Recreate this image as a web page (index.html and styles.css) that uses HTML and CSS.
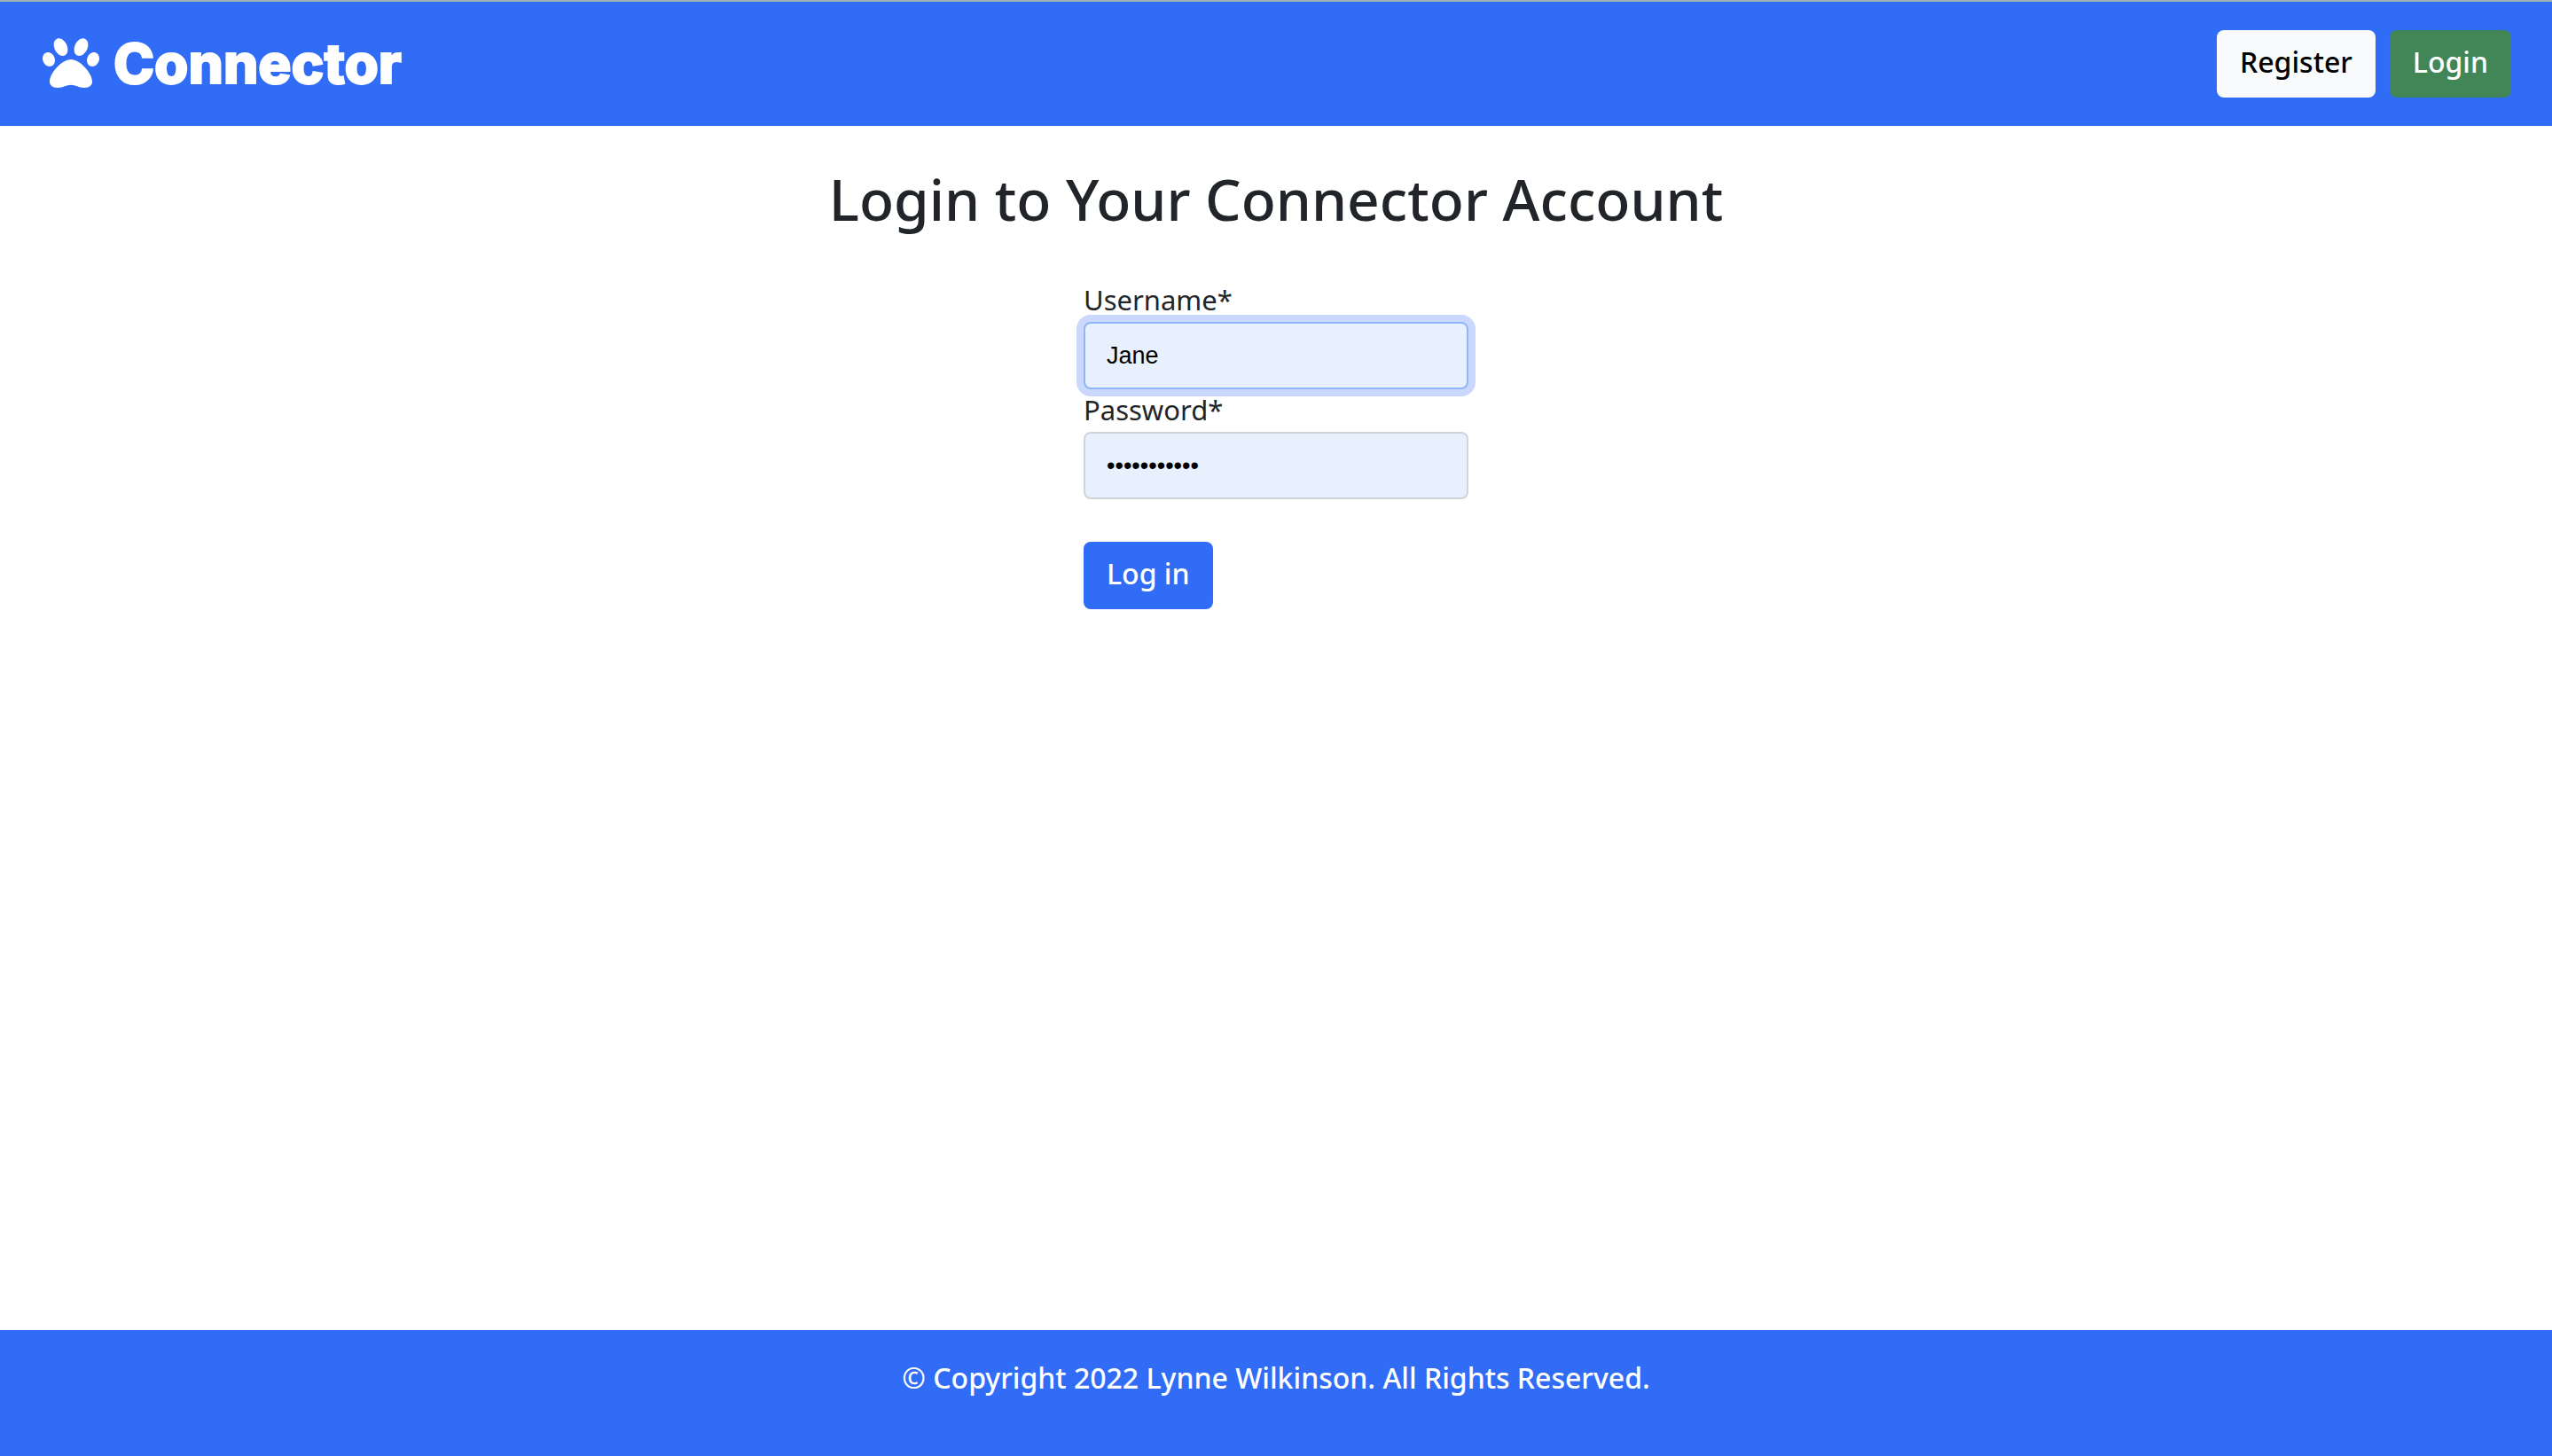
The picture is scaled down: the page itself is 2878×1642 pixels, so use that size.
FILE: index.html
```html
<!DOCTYPE html>
<html lang="en">
<head>
  <meta charset="utf-8">
  <meta name="viewport" content="width=device-width, initial-scale=1">
  <title>Connector</title>
  <link rel="stylesheet" href="styles.css">
</head>
<body>
  <header class="site-header">
    <a class="brand" href="#">
      <svg class="brand-icon" viewBox="0 0 512 512" aria-hidden="true"><path fill="currentColor" d="M256 224c-79.41 0-192 122.76-192 200.25 0 34.9 26.81 55.75 71.74 55.75 48.84 0 81.09-25.08 120.26-25.08 39.51 0 71.85 25.08 120.26 25.08 44.93 0 71.74-20.85 71.74-55.75C448 346.76 335.41 224 256 224zm-147.28-12.61c-10.4-34.65-42.44-57.09-71.56-50.13-29.12 6.96-44.29 40.69-33.89 75.34 10.4 34.65 42.44 57.09 71.56 50.13 29.12-6.96 44.29-40.69 33.89-75.34zm84.72-20.78c30.94-8.14 42.94-49.34 26.81-92.01s-54.29-70.66-85.22-62.52-42.94 49.34-26.81 92.01c16.14 42.67 54.29 70.66 85.22 62.52zm281.4-29.34c-29.12-6.96-61.15 15.48-71.56 50.13-10.4 34.65 4.77 68.38 33.89 75.34 29.12 6.96 61.15-15.48 71.56-50.13 10.4-34.65-4.77-68.38-33.89-75.34zm-156.27 29.34c30.94 8.14 69.09-19.85 85.22-62.52 16.14-42.67 4.14-83.87-26.81-92.01s-69.09 19.85-85.22 62.52c-16.14 42.67-4.14 83.87 26.81 92.01z"/></svg>
      <span class="brand-name">Connector</span>
    </a>
    <nav class="account-links">
      <a class="btn btn-light" href="#">Register</a>
      <a class="btn btn-success" href="#">Login</a>
    </nav>
  </header>

  <main class="content">
    <h1 class="title">Login to Your Connector Account</h1>
    <form class="login-form">
      <label class="label" for="username">Username*</label>
      <input class="field field-active" id="username" type="text" value="Jane">
      <label class="label" for="password">Password*</label>
      <input class="field" id="password" type="password" value="connector22">
      <button class="btn btn-primary" type="submit">Log in</button>
    </form>
  </main>

  <footer class="site-footer">© Copyright 2022 Lynne Wilkinson. All Rights Reserved.</footer>
</body>
</html>
```
FILE: styles.css
```css
* {
  box-sizing: border-box;
}

body {
  display: flex;
  flex-direction: column;
  min-height: 100vh;
  margin: 0;
  background: #fff;
  color: #212529;
  font-family: "Noto Sans", sans-serif;
  font-size: 32px;
  font-weight: 500;
  line-height: 48px;
}

.site-header {
  display: flex;
  align-items: center;
  justify-content: space-between;
  padding: 32px 46px 32px 48px;
  border-top: 2px solid #9ab3b5;
  background: #306cf5;
}

.brand {
  display: flex;
  align-items: center;
  gap: 16px;
  color: #fff;
  text-decoration: none;
}

.brand-icon {
  width: 64px;
  height: 64px;
  margin-bottom: 2px;
}

.brand-name {
  font-family: Inter, sans-serif;
  font-size: 62px;
  font-weight: 800;
  line-height: 64px;
  -webkit-text-stroke: 2px #fff;
  stroke-linejoin: round;
}

.account-links {
  display: flex;
  gap: 16px;
}

.btn {
  padding: 10px 24px 14px;
  border: 2px solid transparent;
  border-radius: 8px;
  font: inherit;
  text-align: center;
  text-decoration: none;
}

.btn-light {
  background: #f8fafc;
  color: #000;
}

.btn-success {
  background: #428657;
  color: #fff;
}

.btn-primary {
  align-self: flex-start;
  margin-top: 48px;
  background: #306cf5;
  color: #fff;
}

.content {
  display: flex;
  flex: 1;
  flex-direction: column;
  align-items: center;
  padding: 43px 48px;
}

.title {
  margin: 0 0 50px;
  font-size: 64px;
  font-weight: 500;
  line-height: 80px;
  text-align: center;
}

.login-form {
  display: flex;
  flex-direction: column;
  width: 434px;
}

.label {
  padding-bottom: 2px;
  font-size: 31px;
  font-weight: 400;
  line-height: 46px;
}

.field {
  width: 100%;
  height: 76px;
  padding: 12px 24px;
  border: 2px solid #ced4da;
  border-radius: 8px;
  outline: none;
  background: #e8effd;
  color: #000;
  font-family: "Liberation Sans", Arial, sans-serif;
  font-size: 27px;
}

.field-active {
  border-color: #8fb6f8;
  box-shadow: 0 0 0 8px #cad8fd;
}

.site-footer {
  padding: 30px 48px 64px;
  background: #306cf5;
  color: #fff;
  text-align: center;
}
```
